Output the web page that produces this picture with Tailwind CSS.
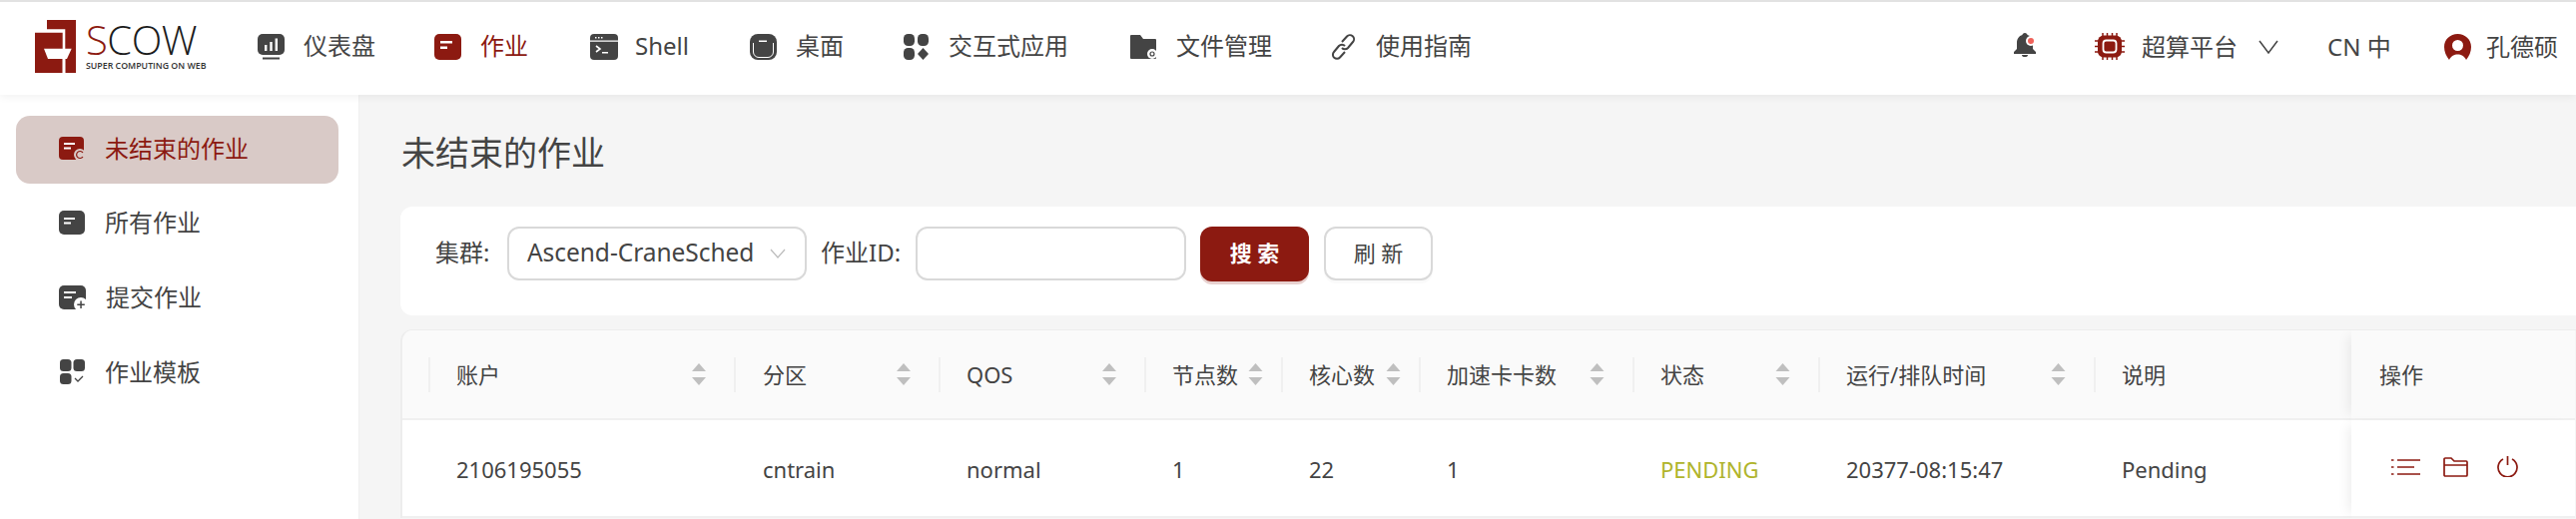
<!DOCTYPE html>
<html>
<head>
    <meta charset="utf-8">
    <title>SCOW</title>
    <script src="https://cdn.jsdelivr.net/npm/@tailwindcss/browser@4"></script>
</head>
<body class="font-['Noto_Sans','Noto_Sans_CJK_SC',sans-serif] text-[#444444] bg-[#f5f5f5]">
<div class="h-[520px] w-[2580px] overflow-hidden flex flex-col border-t-2 border-[#e2e2e2]">

    <!-- top bar -->
    <header class="h-[93px] shrink-0 bg-white flex items-center justify-between pb-[4px] shadow-[0_2px_8px_rgba(0,0,0,0.06)] relative z-10 text-[24px]">
        <div class="flex items-center">
            <div class="w-[258px] pl-[35px] flex items-center gap-[10px]">
                <svg class="w-[41px] h-[53px] shrink-0" viewBox="0 0 41 53">
                    <path fill="#8c1a11" d="M12 0h29v53H12z"/>
                    <path fill="#fff" d="M0 9.300h30.300V53H0z"/>
                    <path fill="#8c1a11" d="M0 12.700h27.700V53H0z"/>
                    <path fill="#fff" d="M9 28.700h27.700L32 39H13z"/>
                    <path fill="#fff" d="M27.700 39h2.600v14h-2.600z"/>
                </svg>
                <div class="flex flex-col w-[112px]">
                    <div class="font-['Open_Sans'] font-light text-[40px] leading-[36px] tracking-[-0.5px] text-[#1c1c1c]"><span class="text-[#8c1a11]">S</span>COW</div>
                    <div class="font-['Open_Sans'] font-semibold text-[8.8px] leading-[10px] mt-[3px] whitespace-nowrap text-[#333]">SUPER COMPUTING ON WEB</div>
                </div>
            </div>
            <nav class="flex items-center">
                <a class="w-[177px] flex items-center gap-[19px]">
                    <svg class="w-[27px] h-[26px]" viewBox="0 0 27 26"><rect x="0" y="0" width="27" height="21" rx="5" fill="#444"/><path fill="#fff" d="M7 11h2.400v6H7zM12.300 8h2.400v9h-2.400zM17.600 4.500h2.400V17h-2.400z"/><rect x="5" y="23.500" width="17" height="2" fill="#444"/></svg>
                    <span class="pb-[2px]">仪表盘</span>
                </a>
                <a class="w-[156px] flex items-center gap-[19px] text-[#8c1a11]">
                    <svg class="w-[27px] h-[26px]" viewBox="0 0 27 26"><rect width="27" height="26" rx="5" fill="#8c1a11"/><path fill="#fff" d="M6 7h12v2.500H6zM6 12.500h7V15H6z"/></svg>
                    <span class="pb-[2px]">作业</span>
                </a>
                <a class="w-[160px] flex items-center gap-[17px]">
                    <svg class="w-[28px] h-[26px]" viewBox="0 0 28 26"><rect width="28" height="26" rx="4" fill="#444"/><path fill="#fff" d="M0 6.500h28v1.300H0zM5 3h1.500v1.500H5zM8 3h1.500v1.500H8zM11 3h1.500v1.500H11z"/><path d="M6 12l4 3-4 3" stroke="#fff" stroke-width="1.600" fill="none"/><path fill="#fff" d="M12 18h6v1.500h-6z"/></svg>
                    <span class="pb-[2px]">Shell</span>
                </a>
                <a class="w-[154px] flex items-center gap-[19px]">
                    <svg class="w-[27px] h-[26px]" viewBox="0 0 27 26"><rect width="27" height="26" rx="8" fill="#444"/><path d="M3.500 9v9a5.500 5.500 0 0 0 5.500 5.500h9a5.500 5.500 0 0 0 5.500-5.500V9" fill="none" stroke="#fff" stroke-width="1"/><path fill="#fff" d="M9 6.500h8v1.500H9z"/></svg>
                    <span class="pb-[2px]">桌面</span>
                </a>
                <a class="w-[227px] flex items-center gap-[20px]">
                    <svg class="w-[25px] h-[26px]" viewBox="0 0 25 26"><rect width="11" height="12" rx="4.500" fill="#444"/><rect x="14" width="11" height="12" rx="4.500" fill="#444"/><rect y="14" width="11" height="12" rx="4.500" fill="#444"/><path fill="#444" d="M19.500 14l5.500 6-5.500 6-5.500-6z"/></svg>
                    <span class="pb-[2px]">交互式应用</span>
                </a>
                <a class="w-[201px] flex items-center gap-[20px]">
                    <svg class="w-[26px] h-[24px]" viewBox="0 0 26 24"><path fill="#444" d="M1 0h9l3 4h12a1 1 0 0 1 1 1v18a1 1 0 0 1-1 1H1a1 1 0 0 1-1-1V1a1 1 0 0 1 1-1z"/><circle cx="22" cy="19" r="5" fill="#fff"/><circle cx="22" cy="19" r="2" fill="none" stroke="#444" stroke-width="1.200"/></svg>
                    <span class="pb-[2px]">文件管理</span>
                </a>
                <a class="flex items-center gap-[20px]">
                    <svg class="w-[25px] h-[26px]" viewBox="0 0 25 26" fill="none" stroke="#444" stroke-width="2"><path d="M11 8l5-5.500a4 4 0 0 1 6 5.500l-5 6a4 4 0 0 1-6 0"/><path d="M14 18l-5 5.500a4 4 0 0 1-6-5.500l5-6a4 4 0 0 1 6 0"/></svg>
                    <span class="pb-[2px]">使用指南</span>
                </a>
            </nav>
        </div>
        <div class="flex items-center">
            <svg class="w-[22px] h-[24px] mr-[59px] -mt-[3px]" viewBox="0 0 22 24"><path fill="#444" d="M11 0c1.500 0 2.500 1 2.500 2 3.500 1 5.500 4 5.500 8v6l3 3v2H0v-2l3-3v-6c0-4 2-7 5.500-8 0-1 1-2 2.500-2zM8 22h6a3 2 0 0 1-6 0z"/><circle cx="17" cy="8" r="5" fill="#fff"/><circle cx="17" cy="8" r="3" fill="#f0625a"/></svg>
            <svg class="w-[30px] h-[27px] mr-[17px]" viewBox="0 0 30 27"><path stroke="#8c1a11" stroke-width="1.500" d="M8 0v27M12.500 0v27M17.500 0v27M22 0v27M0 8h30M0 13.500h30M0 19h30"/><rect x="3" y="2.500" width="24" height="22" rx="6" fill="#8c1a11"/><rect x="8.500" y="7.500" width="13" height="12" rx="3" fill="none" stroke="#fff" stroke-width="1.800"/></svg>
            <span class="w-[117px]">超算平台</span>
            <svg class="w-[20px] h-[14px] mr-[49px]" viewBox="0 0 20 14" fill="none" stroke="#444" stroke-width="1.500"><path d="M1 1l9 12 9-12"/></svg>
            <span class="w-[117px]">CN 中</span>
            <svg class="w-[27px] h-[26px] mr-[15px]" viewBox="0 0 27 26"><path fill="#8c1a11" d="M13.500 0C21 0 27 5.500 27 13c0 5-2 9-5 13-2-4-5-5.500-8.500-5.500S7 22 5 26c-3-4-5-8-5-13C0 5.500 6 0 13.500 0z"/><circle cx="13.500" cy="11.500" r="5.500" fill="#fff"/></svg>
            <span class="w-[90px]">孔德硕</span>
        </div>
    </header>

    <div class="flex-1 flex min-h-0">
        <!-- side menu -->
        <aside class="w-[360px] shrink-0 bg-white border-r border-[#f0f0f0] pt-[21px] pl-[16px] flex flex-col gap-[6.7px] text-[24px]">
            <a class="w-[323px] h-[68px] rounded-[14px] bg-[#d9cac7] text-[#8c1a11] flex items-center pl-[43px] gap-[20px]">
                <svg class="w-[26px] h-[24px] -mt-[3px]" viewBox="0 0 26 24"><rect width="25" height="23" rx="4" fill="#8c1a11"/><path fill="#fff" d="M5 6h11v2H5zM5 10.500h7v2H5z"/><circle cx="21" cy="18" r="6" fill="#d9cac7"/><path d="M24 16a3.500 3.500 0 1 0 0 4" fill="none" stroke="#8c1a11" stroke-width="1.200"/></svg>
                <span class="pb-[3px]">未结束的作业</span>
            </a>
            <a class="w-[323px] h-[68px] flex items-center pl-[43px] gap-[20px]">
                <svg class="w-[26px] h-[24px] -mt-[3px]" viewBox="0 0 26 24"><rect width="26" height="24" rx="5" fill="#444"/><path fill="#fff" d="M5 7h11v2H5zM5 11.500h7v2H5z"/></svg>
                <span class="pb-[3px]">所有作业</span>
            </a>
            <a class="w-[323px] h-[68px] flex items-center pl-[43px] gap-[20px]">
                <svg class="w-[27px] h-[24px] -mt-[3px]" viewBox="0 0 27 24"><rect width="27" height="24" rx="5" fill="#444"/><path fill="#fff" d="M5 6h12v2H5zM5 11h8v2H5z"/><circle cx="22" cy="19" r="7" fill="#fff"/><path fill="#444" d="M21.300 15.500h1.500v3h3V20h-3v3h-1.500v-3h-3v-1.500h3z"/></svg>
                <span class="pb-[3px]">提交作业</span>
            </a>
            <a class="w-[323px] h-[68px] flex items-center pl-[44px] gap-[20px]">
                <svg class="w-[25px] h-[25px] -mt-[3px]" viewBox="0 0 25 25"><rect width="11.500" height="12" rx="3.500" fill="#444"/><rect x="13.500" width="11.500" height="12" rx="3.500" fill="#444"/><rect y="14" width="11.500" height="11" rx="3.500" fill="#444"/><path d="M15 19l3 3 5-5" fill="none" stroke="#444" stroke-width="1.300"/></svg>
                <span class="pb-[3px]">作业模板</span>
            </a>
        </aside>

        <main class="flex-1 min-w-0 pt-[38px] pl-[41px] overflow-hidden">
            <h1 class="text-[34px] leading-[40px] h-[40px] mb-[34px] pl-[1px]">未结束的作业</h1>

            <!-- filter form -->
            <form class="h-[109px] bg-white rounded-l-[12px] pt-[20px] pl-[35px] flex items-start text-[24px]">
                <label class="w-[72px] leading-[52px]">集群:</label>
                <div class="w-[300px] h-[54px] border-2 border-[#d9d9d9] rounded-[12px] flex items-center justify-between pl-[18px] pr-[19px]">
                    <span class="text-[24.5px] pb-[2px] -tracking-[0.05px]">Ascend-CraneSched</span>
                    <svg class="w-[16px] h-[10px]" viewBox="0 0 16 10" fill="none" stroke="#bdbdbd" stroke-width="1.300"><path d="M1 1l7 8 7-8"/></svg>
                </div>
                <label class="w-[95px] ml-[14px] leading-[52px]">作业ID:</label>
                <div class="w-[271px] h-[54px] border-2 border-[#d9d9d9] rounded-[12px]"></div>
                <button type="button" class="w-[109px] h-[55px] ml-[14px] pb-[2px] rounded-[12px] bg-[#8c1a11] text-white font-bold text-[22px] shadow-[0_3px_0_rgba(140,26,17,0.2)]">搜 索</button>
                <button type="button" class="w-[109px] h-[54px] ml-[15px] pb-[2px] rounded-[12px] bg-white border-2 border-[#d9d9d9] text-[22px] shadow-[0_3px_0_rgba(0,0,0,0.02)]">刷 新</button>
            </form>

            <!-- jobs table, scrolled sideways so the first column is cut off -->
            <div class="mt-[14px] rounded-tl-[12px] overflow-hidden border-l-2 border-t border-[#ededed] text-[22px] grid grid-cols-[26px_306px_205px_206px_137px_138px_214px_186px_276px_258px_224px]">
                <div class="h-[90px] bg-[#fafafa] border-b-2 border-[#f0f0f0]"></div>
                <div class="h-[90px] bg-[#fafafa] border-b-2 border-[#f0f0f0] flex items-center"><div class="w-full h-[35px] border-l-2 border-[#f0f0f0] pl-[26px] pr-[28px] flex items-center justify-between"><span>账户</span><svg class="w-[14px] h-[22px]" viewBox="0 0 14 22"><path fill="#bfbfbf" d="M7 0l7 8H0zM7 22L0 14h14z"/></svg></div></div>
                <div class="h-[90px] bg-[#fafafa] border-b-2 border-[#f0f0f0] flex items-center"><div class="w-full h-[35px] border-l-2 border-[#f0f0f0] pl-[27px] pr-[28px] flex items-center justify-between"><span>分区</span><svg class="w-[14px] h-[22px]" viewBox="0 0 14 22"><path fill="#bfbfbf" d="M7 0l7 8H0zM7 22L0 14h14z"/></svg></div></div>
                <div class="h-[90px] bg-[#fafafa] border-b-2 border-[#f0f0f0] flex items-center"><div class="w-full h-[35px] border-l-2 border-[#f0f0f0] pl-[26px] pr-[28px] flex items-center justify-between"><span>QOS</span><svg class="w-[14px] h-[22px]" viewBox="0 0 14 22"><path fill="#bfbfbf" d="M7 0l7 8H0zM7 22L0 14h14z"/></svg></div></div>
                <div class="h-[90px] bg-[#fafafa] border-b-2 border-[#f0f0f0] flex items-center"><div class="w-full h-[35px] border-l-2 border-[#f0f0f0] pl-[26px] pr-[18px] flex items-center justify-between"><span>节点数</span><svg class="w-[15px] h-[22px]" viewBox="0 0 14 22"><path fill="#bfbfbf" d="M7 0l7 8H0zM7 22L0 14h14z"/></svg></div></div>
                <div class="h-[90px] bg-[#fafafa] border-b-2 border-[#f0f0f0] flex items-center"><div class="w-full h-[35px] border-l-2 border-[#f0f0f0] pl-[26px] pr-[18px] flex items-center justify-between"><span>核心数</span><svg class="w-[15px] h-[22px]" viewBox="0 0 14 22"><path fill="#bfbfbf" d="M7 0l7 8H0zM7 22L0 14h14z"/></svg></div></div>
                <div class="h-[90px] bg-[#fafafa] border-b-2 border-[#f0f0f0] flex items-center"><div class="w-full h-[35px] border-l-2 border-[#f0f0f0] pl-[26px] pr-[28px] flex items-center justify-between"><span>加速卡卡数</span><svg class="w-[15px] h-[22px]" viewBox="0 0 14 22"><path fill="#bfbfbf" d="M7 0l7 8H0zM7 22L0 14h14z"/></svg></div></div>
                <div class="h-[90px] bg-[#fafafa] border-b-2 border-[#f0f0f0] flex items-center"><div class="w-full h-[35px] border-l-2 border-[#f0f0f0] pl-[26px] pr-[28px] flex items-center justify-between"><span>状态</span><svg class="w-[15px] h-[22px]" viewBox="0 0 14 22"><path fill="#bfbfbf" d="M7 0l7 8H0zM7 22L0 14h14z"/></svg></div></div>
                <div class="h-[90px] bg-[#fafafa] border-b-2 border-[#f0f0f0] flex items-center"><div class="w-full h-[35px] border-l-2 border-[#f0f0f0] pl-[26px] pr-[28px] flex items-center justify-between"><span>运行/排队时间</span><svg class="w-[15px] h-[22px]" viewBox="0 0 14 22"><path fill="#bfbfbf" d="M7 0l7 8H0zM7 22L0 14h14z"/></svg></div></div>
                <div class="h-[90px] bg-[#fafafa] border-b-2 border-[#f0f0f0] flex items-center"><div class="w-full h-[35px] border-l-2 border-[#f0f0f0] pl-[26px] flex items-center"><span>说明</span></div></div>
                <div class="h-[90px] bg-[#fafafa] border-b-2 border-[#f0f0f0] flex items-center pl-[28px] shadow-[-8px_0_12px_-6px_rgba(0,0,0,0.08)] relative">操作</div>

                <div class="h-[98px] bg-white border-b-2 border-[#f0f0f0]"></div>
                <div class="h-[98px] bg-white border-b-2 border-[#f0f0f0] flex items-center pl-[28px] pt-[2px]">2106195055</div>
                <div class="h-[98px] bg-white border-b-2 border-[#f0f0f0] flex items-center pl-[29px] pt-[2px]">cntrain</div>
                <div class="h-[98px] bg-white border-b-2 border-[#f0f0f0] flex items-center pl-[28px] pt-[2px]">normal</div>
                <div class="h-[98px] bg-white border-b-2 border-[#f0f0f0] flex items-center pl-[28px] pt-[2px]">1</div>
                <div class="h-[98px] bg-white border-b-2 border-[#f0f0f0] flex items-center pl-[28px] pt-[2px]">22</div>
                <div class="h-[98px] bg-white border-b-2 border-[#f0f0f0] flex items-center pl-[28px] pt-[2px]">1</div>
                <div class="h-[98px] bg-white border-b-2 border-[#f0f0f0] flex items-center pl-[28px] pt-[2px] text-[#afb42b]">PENDING</div>
                <div class="h-[98px] bg-white border-b-2 border-[#f0f0f0] flex items-center pl-[28px] pt-[2px]">20377-08:15:47</div>
                <div class="h-[98px] bg-white border-b-2 border-[#f0f0f0] flex items-center pl-[28px] pt-[2px]">Pending</div>
                <div class="h-[98px] bg-white border-b-2 border-[#f0f0f0] flex items-center pl-[40px] shadow-[-8px_0_12px_-6px_rgba(0,0,0,0.08)] relative">
                    <svg class="w-[29px] h-[16px] mr-[23px] -mt-[2px]" viewBox="0 0 29 16" fill="none" stroke="#8c1a11" stroke-width="1.500"><path d="M0 1h2.500M6 1h23M0 8h2.500M6 8h17M0 15h2.500M6 15h23"/></svg>
                    <svg class="w-[25px] h-[20px] mr-[29px] -mt-[2px]" viewBox="0 0 25 20" fill="none" stroke="#8c1a11" stroke-width="1.700"><path d="M1 6V2a1 1 0 0 1 1-1h6l3 3h12a1 1 0 0 1 1 1v13a1 1 0 0 1-1 1H2a1 1 0 0 1-1-1zM1 8h23"/></svg>
                    <svg class="w-[21px] h-[21px] -mt-[4px]" viewBox="0 0 21 21" fill="none" stroke="#8c1a11" stroke-width="1.700"><path d="M6 3a9.500 9.500 0 1 0 9 0M10.500 0v9"/></svg>
                </div>
            </div>
        </main>
    </div>
</div>
</body>
</html>
